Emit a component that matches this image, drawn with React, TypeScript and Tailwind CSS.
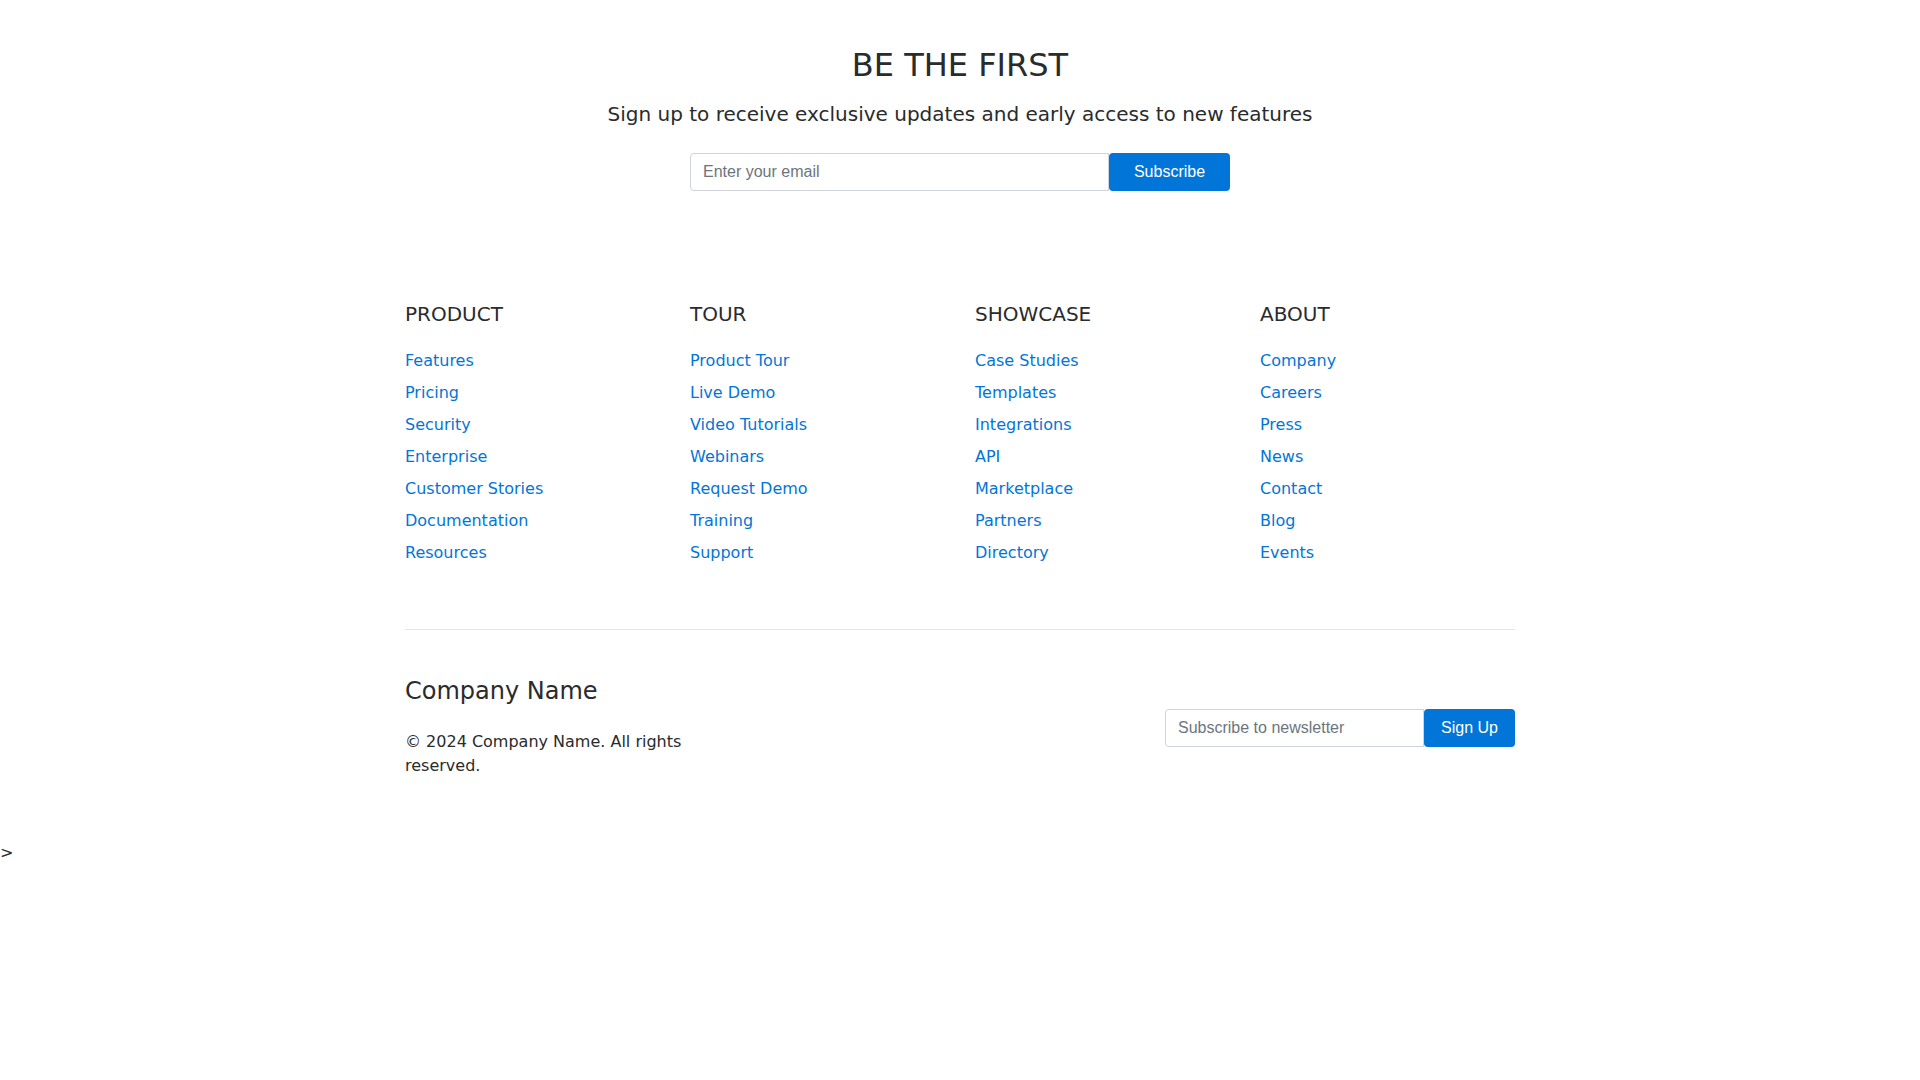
import React from "react";

type LinkColumn = {
  title: string;
  links: string[];
};

const columns: LinkColumn[] = [
  {
    title: "PRODUCT",
    links: ["Features", "Pricing", "Security", "Enterprise", "Customer Stories", "Documentation", "Resources"],
  },
  {
    title: "TOUR",
    links: ["Product Tour", "Live Demo", "Video Tutorials", "Webinars", "Request Demo", "Training", "Support"],
  },
  {
    title: "SHOWCASE",
    links: ["Case Studies", "Templates", "Integrations", "API", "Marketplace", "Partners", "Directory"],
  },
  {
    title: "ABOUT",
    links: ["Company", "Careers", "Press", "News", "Contact", "Blog", "Events"],
  },
];

function FooterColumn({ title, links }: LinkColumn) {
  return (
    <div className="flex flex-col">
      <h5 className="text-[20px] leading-[24px] mb-[23px]">{title}</h5>
      <ul className="flex flex-col gap-2">
        {links.map((link) => (
          <li key={link}>
            <a href="#" className="text-[16px] leading-6 text-[#0275d8] no-underline">
              {link}
            </a>
          </li>
        ))}
      </ul>
    </div>
  );
}

export default function App() {
  return (
    <div className="bg-white min-h-screen text-[#292b2c] font-['DejaVu_Sans',sans-serif] text-[16px] leading-6">
      <section className="w-[1110px] mx-auto pt-[46px] flex flex-col items-center">
        <h2 className="text-[32px] leading-[1.2] font-normal">BE THE FIRST</h2>
        <p className="mt-[15px] text-[20px] leading-[30px]">
          Sign up to receive exclusive updates and early access to new features
        </p>
        <form className="mt-[24px] flex w-[540px] h-[38px] font-['Liberation_Sans',Arial,sans-serif]">
          <input
            type="email"
            placeholder="Enter your email"
            className="flex-1 min-w-0 border border-[#ced4da] rounded-l-[4px] px-3 text-[16px] text-[#495057] placeholder:text-[#6c757d] outline-none"
          />
          <button type="button" className="w-[121px] bg-[#0275d8] text-white text-[16px] rounded-[4px]">
            Subscribe
          </button>
        </form>
      </section>

      <footer className="w-[1110px] mx-auto mt-[111px]">
        <div className="grid grid-cols-4 gap-[30px]">
          {columns.map((col) => (
            <FooterColumn key={col.title} title={col.title} links={col.links} />
          ))}
        </div>

        <div className="mt-[64px] border-t border-[#e5e5e5] pt-[47px] flex items-center justify-between">
          <div className="w-[350px]">
            <h4 className="text-[24px] leading-[1.2]">Company Name</h4>
            <p className="mt-[24px] text-[16px] leading-6">© 2024 Company Name. All rights reserved.</p>
          </div>
          <form className="w-[350px] flex h-[38px] font-['Liberation_Sans',Arial,sans-serif]">
            <input
              type="email"
              placeholder="Subscribe to newsletter"
              className="flex-1 min-w-0 border border-[#ced4da] rounded-l-[4px] px-3 text-[16px] text-[#495057] placeholder:text-[#6c757d] outline-none"
            />
            <button type="button" className="px-[17px] bg-[#0275d8] text-white text-[16px] rounded-[4px]">
              Sign Up
            </button>
          </form>
        </div>
      </footer>

      <div className="mt-[63px]">&gt;</div>
    </div>
  );
}
